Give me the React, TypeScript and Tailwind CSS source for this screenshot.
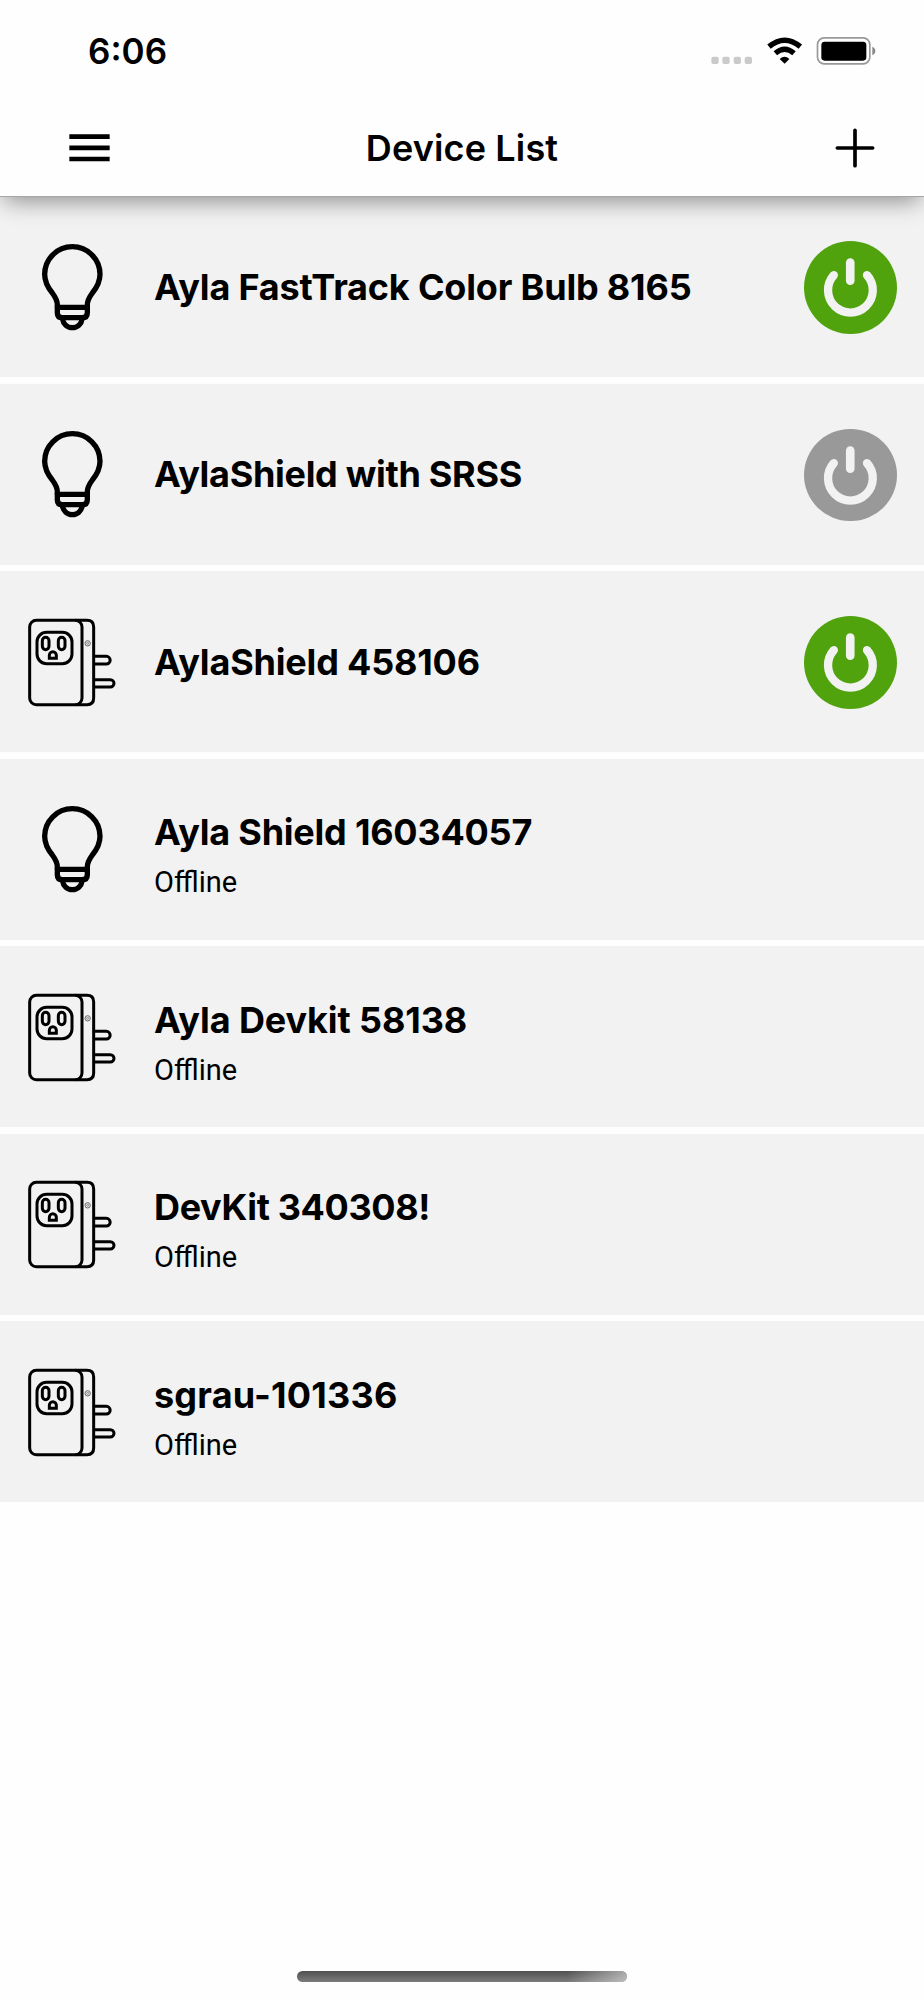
import React from "react";
import clsx from "clsx";

type Device = {
  name: string;
  kind: "bulb" | "plug";
  status: "on" | "off" | "offline";
  spacing: string;
};

const devices: Device[] = [
  { name: "Ayla FastTrack Color Bulb 8165", kind: "bulb", status: "on", spacing: "tracking-[-0.18px]" },
  { name: "AylaShield with SRSS", kind: "bulb", status: "off", spacing: "tracking-[-0.3px]" },
  { name: "AylaShield 458106", kind: "plug", status: "on", spacing: "tracking-[-0.18px]" },
  { name: "Ayla Shield 16034057", kind: "bulb", status: "offline", spacing: "tracking-[-0.22px]" },
  { name: "Ayla Devkit 58138", kind: "plug", status: "offline", spacing: "tracking-[-0.1px]" },
  { name: "DevKit 340308!", kind: "plug", status: "offline", spacing: "tracking-[-0.35px]" },
  { name: "sgrau-101336", kind: "plug", status: "offline", spacing: "tracking-[0.2px]" },
];

const BulbIcon = () => (
  <svg className="size-[120px]" viewBox="0 20 360 360" fill="none" stroke="#000" strokeWidth="16">
    <path d="M112 261V254C112 242 106 230 97 218C82 200 74 184 74 162A82.500 82.500 0 0 1 240 162C240 184 232 200 217 218C208 230 202 242 202 254V261" />
    <path d="M105 261H209" />
    <path d="M112 258V277Q112 292 127 292H187Q202 292 202 277V258" />
    <path d="M127 294C130 312 142 322 157 322S184 312 187 294" />
  </svg>
);

const PlugIcon = () => (
  <svg className="size-[120px]" viewBox="0 6 360 360" fill="none" stroke="#000" strokeWidth="9">
    <rect x="29" y="61" width="157" height="253" rx="20" />
    <path d="M166 61H201Q221 61 221 81V294Q221 314 201 314H166" />
    <rect x="51" y="97" width="105" height="94" rx="29" />
    <rect x="67" y="112" width="20" height="37" rx="10" />
    <rect x="115" y="112" width="20" height="37" rx="10" />
    <path d="M88 175V166A10.500 11 0 0 1 109 166V175Z" />
    <path d="M221 169H259A11.500 11.500 0 0 1 259 192H221" />
    <path d="M221 239H271A11 11 0 0 1 271 261H221" />
    <circle cx="203" cy="130" r="8" stroke="#666" strokeWidth="3" />
    <circle cx="203" cy="130" r="3" stroke="#888" strokeWidth="3" />
  </svg>
);

const PowerButton = ({ on }: { on: boolean }) => (
  <button
    className={clsx(
      "mt-[1.5px] mr-[27.5px] size-[92.5px] rounded-full",
      on ? "bg-[#50a30d]" : "bg-[#999999]",
    )}
  >
    <svg className="size-full" viewBox="72 62 279 279" fill="none" stroke="#f2f2f2" strokeLinecap="round">
      <path d="M211.500 127V182" strokeWidth="26" />
      <path d="M162 165A67.500 67.500 0 1 0 262 165" strokeWidth="25" />
    </svg>
  </button>
);

const DeviceRow = ({ device }: { device: Device }) => (
  <li className="flex h-[181px] items-center bg-[#f2f2f2]">
    <div className="ml-5 w-[134px] shrink-0">
      {device.kind === "bulb" ? <BulbIcon /> : <PlugIcon />}
    </div>
    <div className={clsx("flex-1 whitespace-nowrap", device.status === "offline" && "pt-3")}>
      <h2 className={clsx("text-[36px] leading-[44px] font-bold", device.spacing)}>
        {device.name}
      </h2>
      {device.status === "offline" && (
        <p className="mt-2.5 font-['Roboto',sans-serif] text-[29px] leading-[36px]">Offline</p>
      )}
    </div>
    {device.status !== "offline" && <PowerButton on={device.status === "on"} />}
  </li>
);

const StatusBar = () => (
  <div className="flex h-[101px] items-center justify-between pr-[48px] pl-[88px]">
    <span className="pt-px text-[35px] leading-none font-semibold">6:06</span>
    <svg className="h-[30px] w-[165px]" viewBox="95 106 495 90">
      <g fill="#cacaca">
        <rect x="96" y="168" width="22" height="22" rx="6" />
        <rect x="129" y="168" width="22" height="22" rx="6" />
        <rect x="163" y="168" width="22" height="22" rx="6" />
        <rect x="196" y="168" width="22" height="22" rx="6" />
      </g>
      <g fill="none" stroke="#000" strokeWidth="16">
        <path d="M269 138Q316 99 363 138" />
        <path d="M288 158Q316 134 344 158" />
      </g>
      <path d="M301 175Q316 162 330 175L316 189Z" />
      <rect x="414.500" y="111.500" width="157" height="78" rx="20" fill="none" stroke="#999" strokeWidth="5" />
      <rect x="426" y="123" width="135" height="57" rx="10" />
      <path d="M579 138Q588 142 588 151T579 164Z" fill="#888" />
    </svg>
  </div>
);

const Header = () => (
  <header className="relative z-10 h-[197px] border-b border-[#a6a6a6] bg-[#fefefe] shadow-[0_8px_22px_-4px_rgba(0,0,0,0.42)]">
    <StatusBar />
    <div className="grid h-[93px] grid-cols-[1fr_auto_1fr] items-center pr-[49px] pl-[69px]">
      <svg className="h-[28px] w-[42px]" viewBox="0 0 126 84">
        <path d="M1 8H122M1 41.500H122M1 75H122" stroke="#000" strokeWidth="14" />
      </svg>
      <h1 className="-ml-5 text-[36px] leading-none font-semibold tracking-[0.15px]">Device List</h1>
      <svg className="size-[40px] justify-self-end" viewBox="0 0 120 120">
        <path d="M60 7V113M7 60H113" stroke="#000" strokeWidth="11" strokeLinecap="round" />
      </svg>
    </div>
  </header>
);

export default function App() {
  return (
    <div className="flex h-[2000px] w-[924px] flex-col overflow-hidden bg-[#fefefe] font-['Inter',sans-serif] text-black">
      <Header />
      <ul className="-mt-px flex flex-col gap-[6.5px]">
        {devices.map((device) => (
          <DeviceRow key={device.name} device={device} />
        ))}
      </ul>
      <div className="mx-auto mt-auto mb-[18px] h-[11px] w-[330px] overflow-hidden rounded-full bg-linear-to-b from-[#505050] to-[#7c7c7c]">
        <div className="ml-auto h-full w-[60px] bg-linear-to-r from-white/0 to-white/50" />
      </div>
    </div>
  );
}
